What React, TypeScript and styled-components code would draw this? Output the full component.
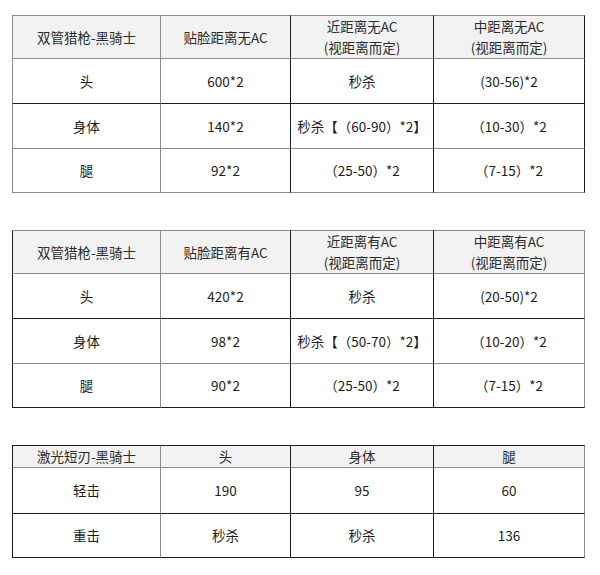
import React from "react";
import styled, { createGlobalStyle } from "styled-components";

const GlobalStyle = createGlobalStyle`
  html, body {
    margin: 0;
    padding: 0;
    background: #ffffff;
  }
  body {
    font-family: "Noto Sans CJK SC", "Noto Sans", "Liberation Sans", sans-serif;
    color: #222222;
  }
`;

const GRAY = "#8c8c8c";
const DARK = "#1e1e1e";

const Page = styled.div`
  display: flex;
  flex-direction: column;
  gap: 37px;
  padding: 15px 0 0 12px;
  width: 600px;
  height: 575px;
  box-sizing: border-box;
`;

const Table = styled.table`
  border-collapse: separate;
  border-spacing: 0;
  table-layout: fixed;
  width: 573px;
`;

const Row = styled.tr<{ $h: number }>`
  height: ${(p) => p.$h}px;
`;

const Cell = styled.td<{
  $top: string;
  $left: string;
  $bottom?: string;
  $right?: string;
  $head?: boolean;
}>`
  box-sizing: border-box;
  padding: 0 4px;
  text-align: center;
  vertical-align: middle;
  font-size: 13.5px;
  line-height: 21px;
  white-space: nowrap;
  text-spacing-trim: space-all;
  color: ${(p) => (p.$head ? "#2b2b2b" : "#1c1c1c")};
  background: ${(p) => (p.$head ? "#f2f2f2" : "#ffffff")};
  border-top: 1px solid ${(p) => p.$top};
  border-left: 1px solid ${(p) => p.$left};
  border-bottom: ${(p) => (p.$bottom ? `1px solid ${p.$bottom}` : "none")};
  border-right: ${(p) => (p.$right ? `1px solid ${p.$right}` : "none")};
`;

const Line = styled.div`
  display: block;
`;

type TableSpec = {
  widths: number[];
  heights: number[];
  h: string[];
  v: string[];
  rows: string[][];
};

const cols = [148, 130, 143, 152];

const tables: TableSpec[] = [
  {
    widths: cols,
    heights: [43, 45, 45, 45],
    h: [GRAY, GRAY, DARK, GRAY, GRAY],
    v: [GRAY, GRAY, DARK, DARK, DARK],
    rows: [
      ["双管猎枪-黑骑士", "贴脸距离无AC", "近距离无AC\n(视距离而定)", "中距离无AC\n(视距离而定)"],
      ["头", "600*2", "秒杀", "(30-56)*2"],
      ["身体", "140*2", "秒杀【（60-90）*2】", "（10-30）*2"],
      ["腿", "92*2", "（25-50）*2", "（7-15）*2"],
    ],
  },
  {
    widths: cols,
    heights: [42, 45, 45, 45],
    h: [GRAY, GRAY, DARK, GRAY, DARK],
    v: [DARK, GRAY, DARK, DARK, GRAY],
    rows: [
      ["双管猎枪-黑骑士", "贴脸距离有AC", "近距离有AC\n(视距离而定)", "中距离有AC\n(视距离而定)"],
      ["头", "420*2", "秒杀", "(20-50)*2"],
      ["身体", "98*2", "秒杀【（50-70）*2】", "（10-20）*2"],
      ["腿", "90*2", "（25-50）*2", "（7-15）*2"],
    ],
  },
  {
    widths: cols,
    heights: [20, 46, 45],
    h: [DARK, GRAY, DARK, DARK],
    v: [DARK, GRAY, DARK, DARK, GRAY],
    rows: [
      ["激光短刃-黑骑士", "头", "身体", "腿"],
      ["轻击", "190", "95", "60"],
      ["重击", "秒杀", "秒杀", "136"],
    ],
  },
];

function DataTable({ spec }: { spec: TableSpec }) {
  const lastRow = spec.rows.length - 1;
  const lastCol = spec.widths.length - 1;
  return (
    <Table>
      <colgroup>
        {spec.widths.map((w, i) => (
          <col key={i} style={{ width: w }} />
        ))}
      </colgroup>
      <tbody>
        {spec.rows.map((row, r) => (
          <Row key={r} $h={spec.heights[r]}>
            {row.map((text, c) => (
              <Cell
                key={c}
                $head={r === 0}
                $top={spec.h[r]}
                $left={spec.v[c]}
                $bottom={r === lastRow ? spec.h[r + 1] : undefined}
                $right={c === lastCol ? spec.v[c + 1] : undefined}
              >
                {text.split("\n").map((t, i) => (
                  <Line key={i}>{t}</Line>
                ))}
              </Cell>
            ))}
          </Row>
        ))}
      </tbody>
    </Table>
  );
}

export default function App() {
  return (
    <>
      <GlobalStyle />
      <Page>
        {tables.map((t, i) => (
          <DataTable key={i} spec={t} />
        ))}
      </Page>
    </>
  );
}
